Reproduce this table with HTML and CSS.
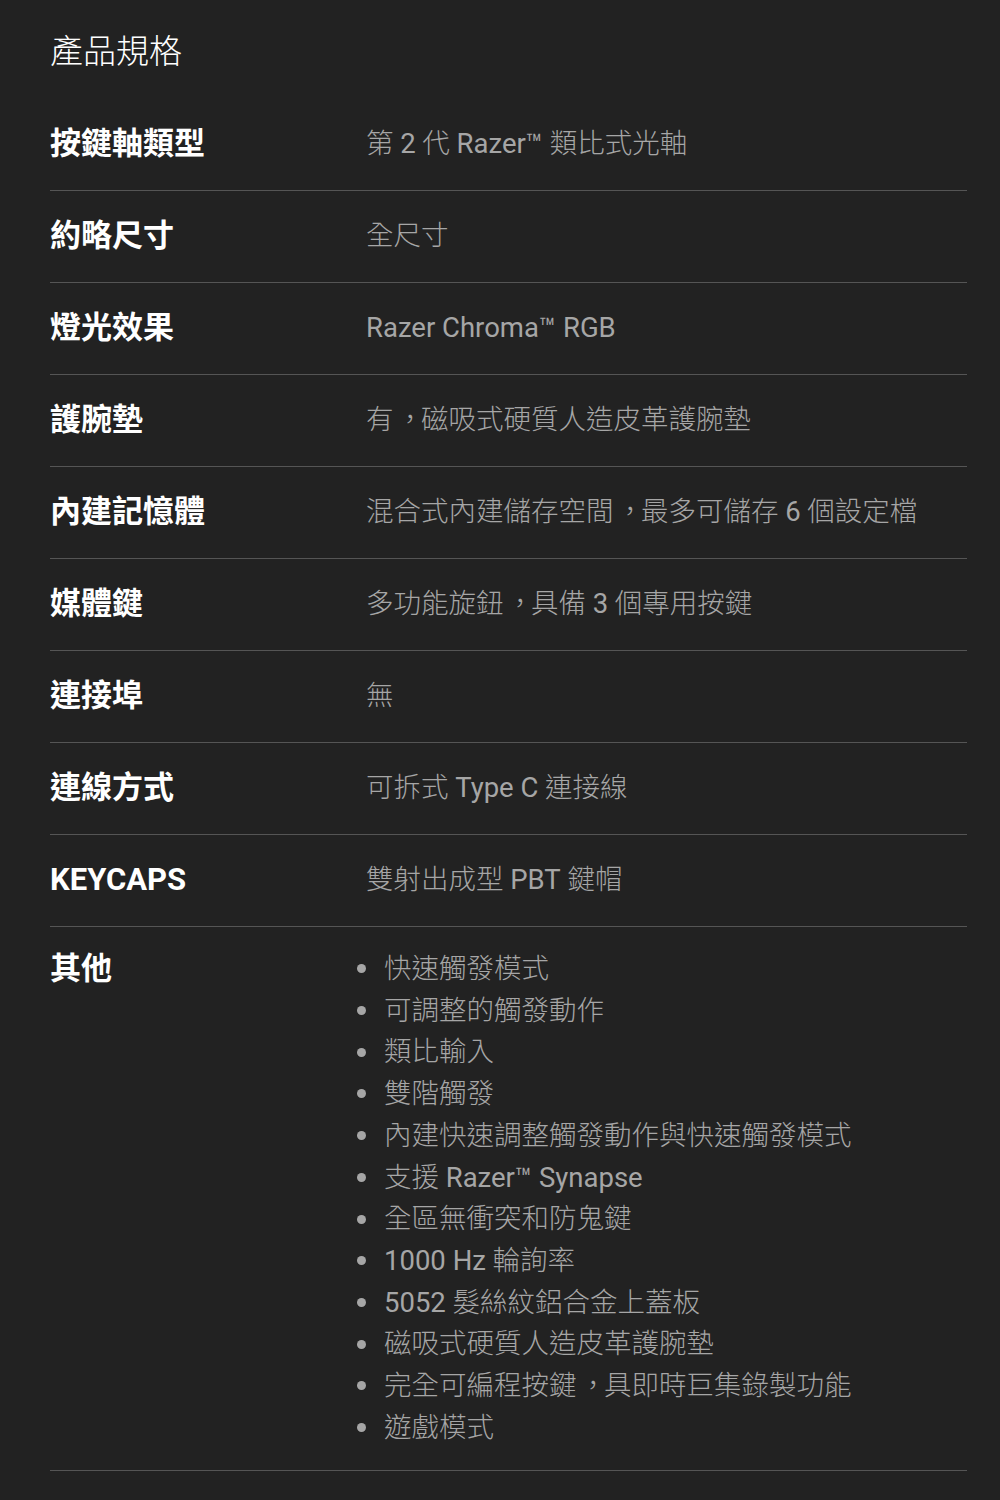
FILE: index.html
```html
<!DOCTYPE html>
<html lang="zh-TW">
<head>
<meta charset="utf-8">
<title>產品規格</title>
<link rel="stylesheet" href="styles.css">
</head>
<body>
<section class="specs">
  <h2 class="title">產品規格</h2>
  <div class="row"><div class="label">按鍵軸類型</div><div class="value">第 <span class="en">2</span> 代 <span class="en">Razer™</span> 類比式光軸</div></div>
  <div class="row"><div class="label">約略尺寸</div><div class="value">全尺寸</div></div>
  <div class="row"><div class="label">燈光效果</div><div class="value"><span class="en">Razer Chroma™ RGB</span></div></div>
  <div class="row"><div class="label">護腕墊</div><div class="value">有<span class="comma">，</span>磁吸式硬質人造皮革護腕墊</div></div>
  <div class="row"><div class="label">內建記憶體</div><div class="value">混合式內建儲存空間<span class="comma">，</span>最多可儲存 <span class="en">6</span> 個設定檔</div></div>
  <div class="row"><div class="label">媒體鍵</div><div class="value">多功能旋鈕<span class="comma">，</span>具備 <span class="en">3</span> 個專用按鍵</div></div>
  <div class="row"><div class="label">連接埠</div><div class="value">無</div></div>
  <div class="row"><div class="label">連線方式</div><div class="value">可拆式 <span class="en">Type C</span> 連接線</div></div>
  <div class="row"><div class="label">KEYCAPS</div><div class="value">雙射出成型 <span class="en">PBT</span> 鍵帽</div></div>
  <div class="row row-list"><div class="label">其他</div>
    <ul class="value list">
      <li>快速觸發模式</li>
      <li>可調整的觸發動作</li>
      <li>類比輸入</li>
      <li>雙階觸發</li>
      <li>內建快速調整觸發動作與快速觸發模式</li>
      <li>支援&nbsp;<span class="en">Razer™ Synapse</span></li>
      <li>全區無衝突和防鬼鍵</li>
      <li><span class="en">1000 Hz</span>&nbsp;輪詢率</li>
      <li><span class="en">5052</span>&nbsp;髮絲紋鋁合金上蓋板</li>
      <li>磁吸式硬質人造皮革護腕墊</li>
      <li>完全可編程按鍵<span class="comma">，</span>具即時巨集錄製功能</li>
      <li>遊戲模式</li>
    </ul>
  </div>
</section>
</body>
</html>
```
FILE: styles.css
```css
html, body {
  margin: 0;
  padding: 0;
  background: #222222;
}
body {
  font-family: Roboto, "Noto Sans CJK TC", sans-serif;
  width: 1000px;
  min-height: 1500px;
}
.specs {
  margin: 0 33px 0 50px;
}
.title {
  margin: 0;
  padding-top: 28px;
  height: 99px;
  box-sizing: border-box;
  font-size: 33px;
  line-height: 48px;
  font-weight: 300;
  color: #ffffff;
}
.row {
  display: grid;
  grid-template-columns: 316px 1fr;
  padding: 24px 0 25px;
  border-bottom: 1px solid #555555;
  line-height: 42px;
}
.label {
  font-size: 31px;
  font-weight: 700;
  color: #ffffff;
}
.value {
  font-size: 27.5px;
  font-weight: 300;
  color: #a6a6a6;
}
.en {
  font-weight: 400;
}
.comma {
  padding-left: 0.1em;
  letter-spacing: -0.1em;
}
.row-list {
  padding-top: 21px;
  padding-bottom: 22px;
}
.list {
  margin: 0 0 0 -9px;
  padding: 0;
  list-style: none;
  line-height: 41.7px;
}
.list li {
  display: flex;
  align-items: center;
  white-space: pre;
}
.list li::before {
  content: "";
  flex: none;
  width: 9px;
  height: 9px;
  border-radius: 50%;
  background: #a6a6a6;
  margin-right: 18px;
}
```
